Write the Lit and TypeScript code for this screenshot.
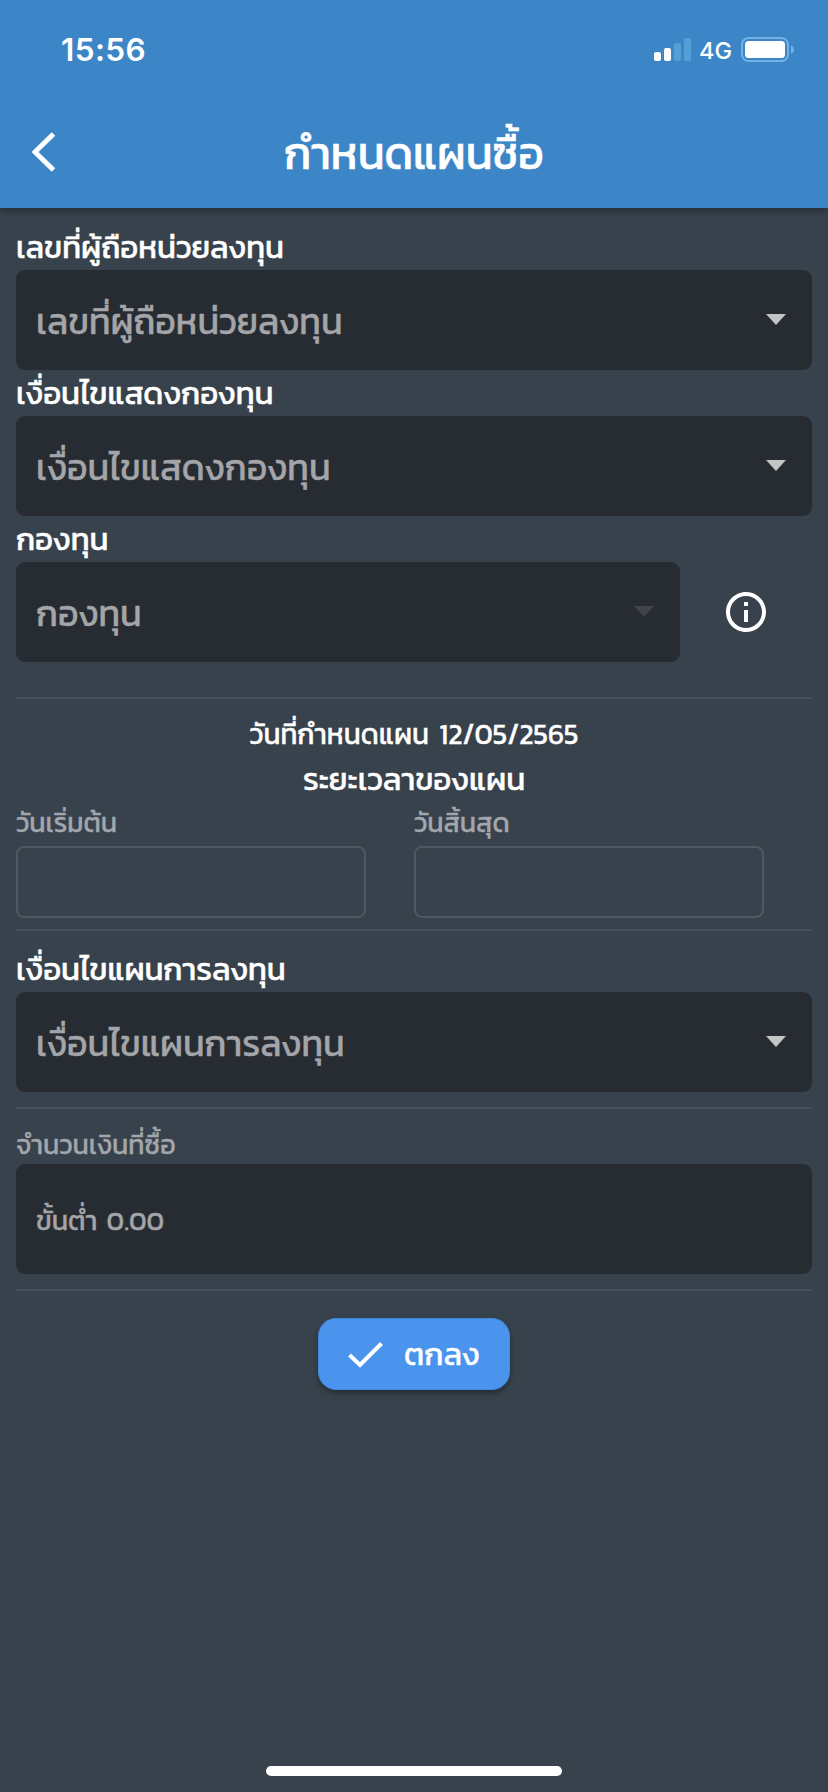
import { LitElement, html, css } from "lit";
import { customElement, property } from "lit/decorators.js";

const base = css`
  * { box-sizing: border-box; }
  .t { white-space: nowrap; display: block; -webkit-text-stroke: .35px currentColor; }
`;

@customElement("select-field")
class SelectField extends LitElement {
  @property() text = "";
  @property({ type: Boolean, reflect: true }) disabled = false;
  static styles = [base, css`
    :host { display: block; color: #c3c4c6; }
    :host([disabled]) { color: #3f434b; }
    .box { height: 100px; border-radius: 9px; background: #272b32; display: flex; align-items: center; justify-content: space-between; padding: 0 26px 0 20px; }
    .t { color: #a3a5a8; font-size: 35.700px; line-height: 60px; padding-top: 4px; }
    svg { display: block; width: 20px; height: 11px; margin-bottom: 2px; fill: currentColor; }
  `];
  render() {
    return html`<div class="box"><span class="t">${this.text}</span><svg viewBox="0 0 20 11"><path d="M0 0H20L10 11Z"/></svg></div>`;
  }
}

@customElement("app-root")
class AppRoot extends LitElement {
  static styles = [base, css`
    :host { display: flex; flex-direction: column; width: 828px; height: 1792px; background: #38424c; color: #fff; font-family: "Kanit", "Prompt", "Noto Sans Thai", "Noto Sans", Inter, sans-serif; overflow: hidden; }
    header { height: 208px; flex: none; background: #3c86c8; box-shadow: 0 2px 8px rgba(0,0,0,.4); position: relative; }
    .status { height: 99px; display: flex; justify-content: space-between; align-items: center; padding: 0 33px 0 61px; font-family: Inter, sans-serif; }
    .time { font-size: 31.500px; font-weight: 600; letter-spacing: .4px; }
    .sys { display: flex; align-items: center; }
    .net { font-size: 23.500px; font-weight: 500; margin: 2px 9px 0 7px; }
    .nav { height: 108px; display: grid; grid-template-columns: 100px 1fr 100px; align-items: center; }
    .back { margin: 0 0 2px 32px; display: block; }
    .title { text-align: center; font-size: 44.400px; line-height: 60px; padding-top: 1px; -webkit-text-stroke-width: .6px; }
    main { flex: 1; padding: 16px 16px 0; }
    .label { height: 46px; line-height: 46px; font-size: 31.200px; -webkit-text-stroke-width: .5px; }
    .muted { color: #a2a7ad; font-size: 26.800px; -webkit-text-stroke-width: .3px; }
    .row { display: flex; align-items: center; }
    .row select-field { width: 664px; }
    .info { margin-left: 46px; display: block; }
    hr { border: 0; height: 2px; background: #454f59; margin: 0; }
    .fund { padding-bottom: 35px; }
    .date { height: 62px; line-height: 71px; text-align: center; font-size: 28px; word-spacing: 4px; }
    .period { height: 40px; line-height: 36px; text-align: center; font-size: 31.300px; -webkit-text-stroke-width: .5px; }
    .dates { display: grid; grid-template-columns: 350px 350px; gap: 48px; padding-bottom: 11px; }
    .dates .label { height: 45px; line-height: 45px; }
    .input { height: 72px; border: 2px solid #4f5963; border-radius: 8px; }
    .cond { padding: 15px 0; }
    .amount { padding: 9px 0 15px; }
    .amount .label { line-height: 55px; }
    .money { height: 110px; border-radius: 9px; background: #272b32; display: flex; align-items: center; padding: 2px 0 0 20px; color: #a3a5a8; font-size: 27px; word-spacing: 3px; }
    .actions { display: flex; justify-content: center; padding-top: 27px; }
    .ok { width: 192px; height: 72px; border-radius: 18px; border: 1px solid #4388dd; background: #4a94ed; box-shadow: 0 3px 5px rgba(0,0,0,.35); display: flex; align-items: center; padding-left: 29px; gap: 21px; font-size: 31.300px; color: #fff; font-family: inherit; }
    .home { width: 296px; height: 10px; border-radius: 5px; background: #fff; margin: 0 auto 16px; flex: none; }
  `];
  render() {
    return html`
      <header>
        <div class="status">
          <span class="time">15:56</span>
          <div class="sys">
            <svg width="38" height="24"><g fill="#fff"><rect x="0" y="14" width="7" height="9" rx="2"/><rect x="10" y="10" width="7" height="13" rx="2"/></g><g fill="#559ed6"><rect x="20" y="5" width="7" height="18" rx="2"/><rect x="30" y="0" width="7" height="23" rx="2"/></g></svg>
            <span class="net">4G</span>
            <svg width="54" height="26"><rect x="1" y="1" width="46" height="23" rx="6.5" fill="none" stroke="#73b2e4" stroke-width="2"/><rect x="4" y="4" width="40" height="17" rx="3.5" fill="#fff"/><path d="M50 8.5Q53 9.5 53 12.500T50 17Z" fill="#73b2e4"/></svg>
          </div>
        </div>
        <div class="nav">
          <svg class="back" width="24" height="40" viewBox="0 0 24 40"><path d="M21.500 2L3 20L21.500 38" fill="none" stroke="#fff" stroke-width="5"/></svg>
          <span class="t title">กำหนดแผนซื้อ</span>
        </div>
      </header>
      <main>
        <span class="t label">เลขที่ผู้ถือหน่วยลงทุน</span>
        <select-field text="เลขที่ผู้ถือหน่วยลงทุน"></select-field>
        <span class="t label">เงื่อนไขแสดงกองทุน</span>
        <select-field text="เงื่อนไขแสดงกองทุน"></select-field>
        <div class="fund">
          <span class="t label">กองทุน</span>
          <div class="row">
            <select-field text="กองทุน" disabled></select-field>
            <svg class="info" width="40" height="40" viewBox="2 2 20 20" fill="#fff"><path d="M11 7h2v2h-2zm0 4h2v6h-2zm1-9C6.480 2 2 6.480 2 12s4.480 10 10 10 10-4.480 10-10S17.520 2 12 2zm0 18c-4.410 0-8-3.590-8-8s3.590-8 8-8 8 3.590 8 8-3.590 8-8 8z"/></svg>
          </div>
        </div>
        <hr>
        <span class="t date">วันที่กำหนดแผน 12/05/2565</span>
        <span class="t period">ระยะเวลาของแผน</span>
        <div class="dates">
          <div><span class="t label muted">วันเริ่มต้น</span><div class="input"></div></div>
          <div><span class="t label muted">วันสิ้นสุด</span><div class="input"></div></div>
        </div>
        <hr>
        <div class="cond">
          <span class="t label">เงื่อนไขแผนการลงทุน</span>
          <select-field text="เงื่อนไขแผนการลงทุน"></select-field>
        </div>
        <hr>
        <div class="amount">
          <span class="t label muted">จำนวนเงินที่ซื้อ</span>
          <div class="money"><span class="t">ขั้นต่ำ 0.00</span></div>
        </div>
        <hr>
        <div class="actions">
          <button class="ok"><svg width="35" height="27" viewBox="0 0 35 27"><path d="M1.500 14L12 24L33.500 2.500" fill="none" stroke="#fff" stroke-width="4"/></svg><span class="t">ตกลง</span></button>
        </div>
      </main>
      <div class="home"></div>`;
  }
}
